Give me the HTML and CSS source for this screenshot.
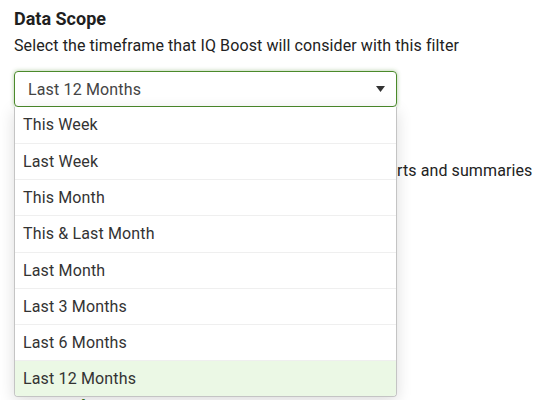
FILE: index.html
```html
<!DOCTYPE HTML>
<html>
<head>
  <meta charset="UTF-8">
  <meta name="viewport" content="width=device-width, initial-scale=1">
  <link rel="stylesheet" href="styles.css">
</head>
<body>
  <div id="page">
    <div class="field">
      <h2>Data Scope</h2>
      <p class="hint">Select the timeframe that IQ Boost will consider with this filter</p>
      <div class="select-wrap">
        <div class="select open">
          <span>Last 12 Months</span>
          <svg class="caret" width="9" height="6" viewBox="0 0 9 6"><path d="M0 0H9L4.5 6Z" fill="#333"/></svg>
        </div>
        <ul class="menu">
          <li>This Week</li>
          <li>Last Week</li>
          <li>This Month</li>
          <li>This &amp; Last Month</li>
          <li>Last Month</li>
          <li>Last 3 Months</li>
          <li>Last 6 Months</li>
          <li class="selected">Last 12 Months</li>
        </ul>
      </div>
    </div>
    <div class="field second">
      <h2>Report Grouping</h2>
      <p class="hint">Choose which data fields IQ Boost should use in reports and summaries</p>
    </div>
    <div class="field third">
      <h2 class="green">12 Months</h2>
    </div>
  </div>
</body>
</html>
```

FILE: styles.css
```css
body
{
  margin: 0;
  font-family: Roboto, "Liberation Sans", sans-serif;
  color: #222;
  background: #fff;
  overflow: hidden;
  height: 400px;
}
#page
{
  padding: 9px 14px 0 14px;
}
h2
{
  margin: 0;
  font-size: 18px;
  font-weight: 700;
  line-height: 20px;
  color: #1f1f1f;
}
.hint
{
  margin: 8px 0 0 0;
  font-size: 16px;
  line-height: 18px;
  letter-spacing: 0.1px;
  color: #222;
  white-space: nowrap;
}
.select-wrap
{
  position: relative;
  width: 383px;
  margin-top: 16px;
}
.select
{
  display: flex;
  align-items: center;
  justify-content: space-between;
  height: 34px;
  padding: 0 11px 0 13px;
  border: 1px solid #4b8a2b;
  border-radius: 4px;
  box-shadow: 0 0 4px rgba(75, 138, 43, 0.45);
  font-size: 16px;
  letter-spacing: 0.15px;
  color: #444;
}
.menu
{
  position: absolute;
  top: 36px;
  left: 0;
  right: 0;
  margin: 0;
  padding: 0;
  list-style: none;
  background: #fff;
  border: 1px solid #c4c4c4;
  border-top: none;
  border-radius: 0 0 4px 4px;
  box-shadow: 0 4px 16px rgba(0, 0, 0, 0.14);
  overflow: hidden;
  z-index: 2;
}
.menu li
{
  height: 35.2px;
  line-height: 36px;
  padding-left: 8px;
  font-size: 16px;
  letter-spacing: 0.15px;
  color: #333;
  border-bottom: 1px solid #efefef;
}
.menu li:first-child
{
  height: 36px;
}
.menu li:last-child
{
  border-bottom: none;
}
.menu li.selected
{
  background: #ebf8e5;
}
.second
{
  margin-top: 28px;
}
.second .hint
{
  margin-top: 7px;
}
.third
{
  margin-top: 217px;
}
.green
{
  color: #3d7a24;
}
```
